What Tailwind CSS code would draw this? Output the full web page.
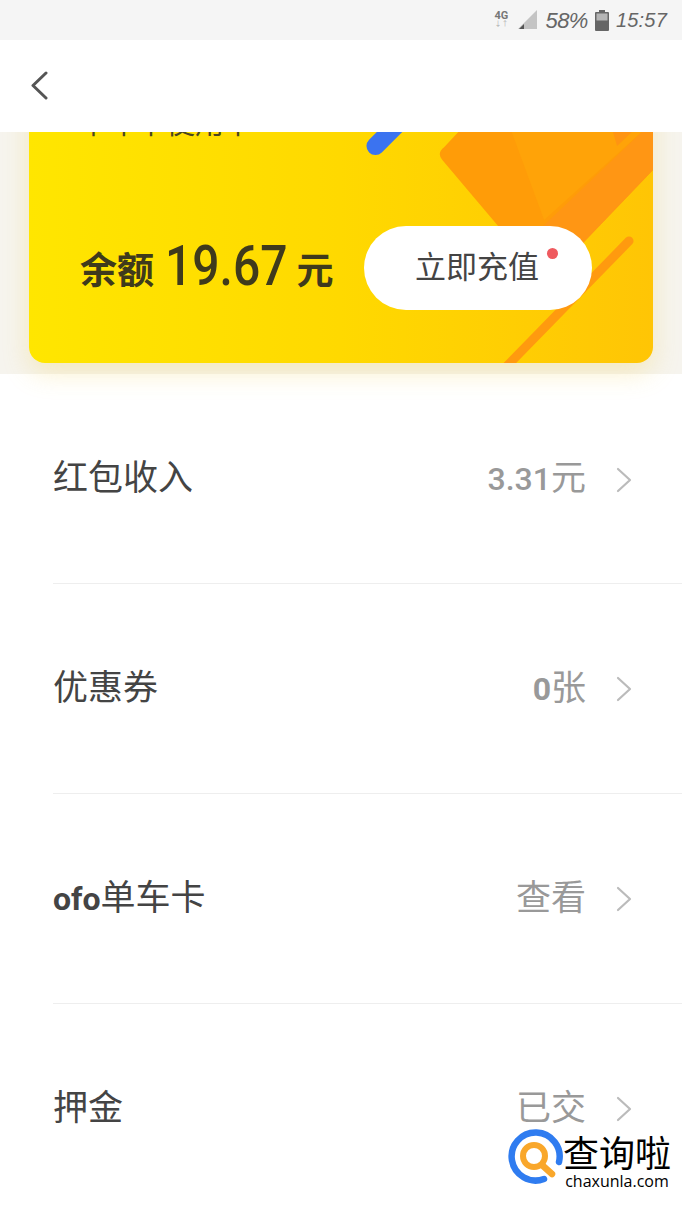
<!DOCTYPE html>
<html lang="zh">
<head>
    <meta charset="UTF-8">
    <title>钱包</title>
    <script src="https://cdn.jsdelivr.net/npm/@tailwindcss/browser@4"></script>
</head>
<body class="relative w-[682px] h-[1212px] overflow-hidden bg-white font-['Roboto','Noto_Sans_CJK_SC',sans-serif] text-[#444]">

<!-- Status bar -->
<div class="relative z-10 h-10 bg-[#f5f5f5] flex items-center justify-end pr-[15px] text-[#666]">
    <div class="flex flex-col items-center leading-none w-4 -mt-[2px]">
        <span class="text-[11px] font-bold text-[#777]">4G</span>
        <span class="text-[7px] text-[#aaa]">↓↑</span>
    </div>
    <svg class="ml-[9px] w-[19px] h-[19px] -mt-[2px]" viewBox="0 0 19 19">
        <path d="M0 19L19 0V19Z" fill="#c4c4c4"/>
        <path d="M1 19L6 14V19Z" fill="#555"/>
    </svg>
    <span class="ml-[8px] text-[22px] tracking-[-0.5px] italic font-['Liberation_Sans',sans-serif]">58%</span>
    <svg class="ml-[7px] w-[14px] h-[21px]" viewBox="0 0 14 21">
        <rect x="4" y="0" width="6" height="2" fill="#666"/>
        <rect x="0" y="2" width="14" height="19" rx="1" fill="#666"/>
        <rect x="1.5" y="3.5" width="11" height="7" fill="#b5b5b5"/>
    </svg>
    <span class="ml-[7px] text-[20px] tracking-[0.2px] italic font-['Liberation_Sans',sans-serif]">15:57</span>
</div>

<!-- Nav -->
<header class="relative z-10 h-[92px] bg-white flex items-center pl-[31px]">
    <svg class="w-[17px] h-[31px] -mt-[2px]" viewBox="0 0 17 31" fill="none" stroke="#555" stroke-width="3" stroke-linecap="round" stroke-linejoin="round">
        <path d="M15 3L2 15.5L15 28"/>
    </svg>
</header>

<!-- Balance card -->
<section class="h-[242px] bg-[#f6f4ee] px-[29px]">
    <div class="relative -top-[68px] h-[299px] rounded-[16px] overflow-hidden bg-gradient-to-r from-[#ffe600] via-[#ffd900] to-[#ffc505] shadow-[0_10px_26px_rgba(240,205,70,0.28)]">
        <svg class="absolute inset-0 w-full h-full" viewBox="29 64 625 299">
            <path d="M400 122L376 146" stroke="#3b73f0" stroke-width="18" stroke-linecap="round"/>
            <path d="M445 147L470 120H654V170L582 245H525Q510 240 498 225L443 160Q437 153 445 147Z" fill="#ff9c08"/>
            <path d="M510 125H650L545 220Z" fill="#ffa308"/>
            <path d="M612 125H640L618 146Z" fill="#ff9412"/>
            <path d="M650 125H654V170L582 245H525Q535 240 545 225Z" fill="#ff9614"/>
            <path d="M630 241L506 368" stroke="#ff9a0f" stroke-width="9" stroke-linecap="round"/>
        </svg>
        <p class="absolute left-[50px] top-[45px] text-[29px] leading-[30px] text-[#4a4520]">单车卡使用卡</p>
        <div class="absolute left-[51px] top-[162px] w-[512px] h-[84px] flex items-center justify-between">
            <div class="flex items-baseline font-bold text-[#3f3a1c]">
                <span class="text-[37px]">余额</span>
                <span class="relative top-[4px] ml-[11px] text-[48px] font-medium scale-y-[1.17] origin-bottom">19.67</span>
                <span class="ml-[9px] text-[37px]">元</span>
            </div>
            <div class="relative w-[228px] h-[84px] rounded-full bg-white flex items-center justify-center text-[31px] pr-[2px] text-[#444]">
                立即充值
                <span class="absolute left-[183px] top-[22px] w-[11px] h-[11px] rounded-full bg-[#ef5a5f]"></span>
            </div>
        </div>
    </div>
</section>

<!-- Rows -->
<main class="pl-[53px]">
    <div class="h-[210px] border-b border-[#eeeeee] flex items-center justify-between pr-[50px] text-[35px] pt-[2px]">
        <span>红包收入</span>
        <div class="flex items-center gap-[30px] text-[#999]">
            <span><span class="font-medium text-[32px]">3.31</span>元</span>
            <svg class="w-[16px] h-[26px]" viewBox="0 0 16 26" fill="none" stroke="#bbb" stroke-width="2.2" stroke-linecap="round" stroke-linejoin="round"><path d="M2 2L14 13L2 24"/></svg>
        </div>
    </div>
    <div class="h-[210px] border-b border-[#eeeeee] flex items-center justify-between pr-[50px] text-[35px] pt-[1px]">
        <span>优惠券</span>
        <div class="flex items-center gap-[30px] text-[#999]">
            <span><span class="font-bold text-[32px]">0</span>张</span>
            <svg class="w-[16px] h-[26px]" viewBox="0 0 16 26" fill="none" stroke="#bbb" stroke-width="2.2" stroke-linecap="round" stroke-linejoin="round"><path d="M2 2L14 13L2 24"/></svg>
        </div>
    </div>
    <div class="h-[210px] border-b border-[#eeeeee] flex items-center justify-between pr-[50px] text-[35px] pt-[1px]">
        <span><span class="font-bold text-[32px]">ofo</span>单车卡</span>
        <div class="flex items-center gap-[30px] text-[#999]">
            <span>查看</span>
            <svg class="w-[16px] h-[26px]" viewBox="0 0 16 26" fill="none" stroke="#bbb" stroke-width="2.2" stroke-linecap="round" stroke-linejoin="round"><path d="M2 2L14 13L2 24"/></svg>
        </div>
    </div>
    <div class="h-[210px] border-b border-[#eeeeee] flex items-center justify-between pr-[50px] text-[35px] pt-[1px]">
        <span>押金</span>
        <div class="flex items-center gap-[30px] text-[#999]">
            <span>已交</span>
            <svg class="w-[16px] h-[26px]" viewBox="0 0 16 26" fill="none" stroke="#bbb" stroke-width="2.2" stroke-linecap="round" stroke-linejoin="round"><path d="M2 2L14 13L2 24"/></svg>
        </div>
    </div>
</main>

<!-- Watermark -->
<div class="absolute left-[508px] top-[1129px] flex">
    <svg class="w-[55px] h-[55px]" viewBox="0 0 55 55" fill="none">
        <path d="M51 33A24 24 0 1 0 36 50" stroke="#2f7cf0" stroke-width="6.5" stroke-linecap="round"/>
        <circle cx="26" cy="27" r="11" stroke="#f9a72b" stroke-width="6"/>
        <path d="M34 36L44 45" stroke="#f9a72b" stroke-width="6.5" stroke-linecap="round"/>
    </svg>
    <div class="flex flex-col items-center text-black">
        <span class="text-[36px] leading-[44px] font-['Noto_Sans_CJK_SC',sans-serif]">查询啦</span>
        <span class="text-[16px] leading-[16px] font-['Open_Sans',sans-serif]">chaxunla.com</span>
    </div>
</div>

</body>
</html>
